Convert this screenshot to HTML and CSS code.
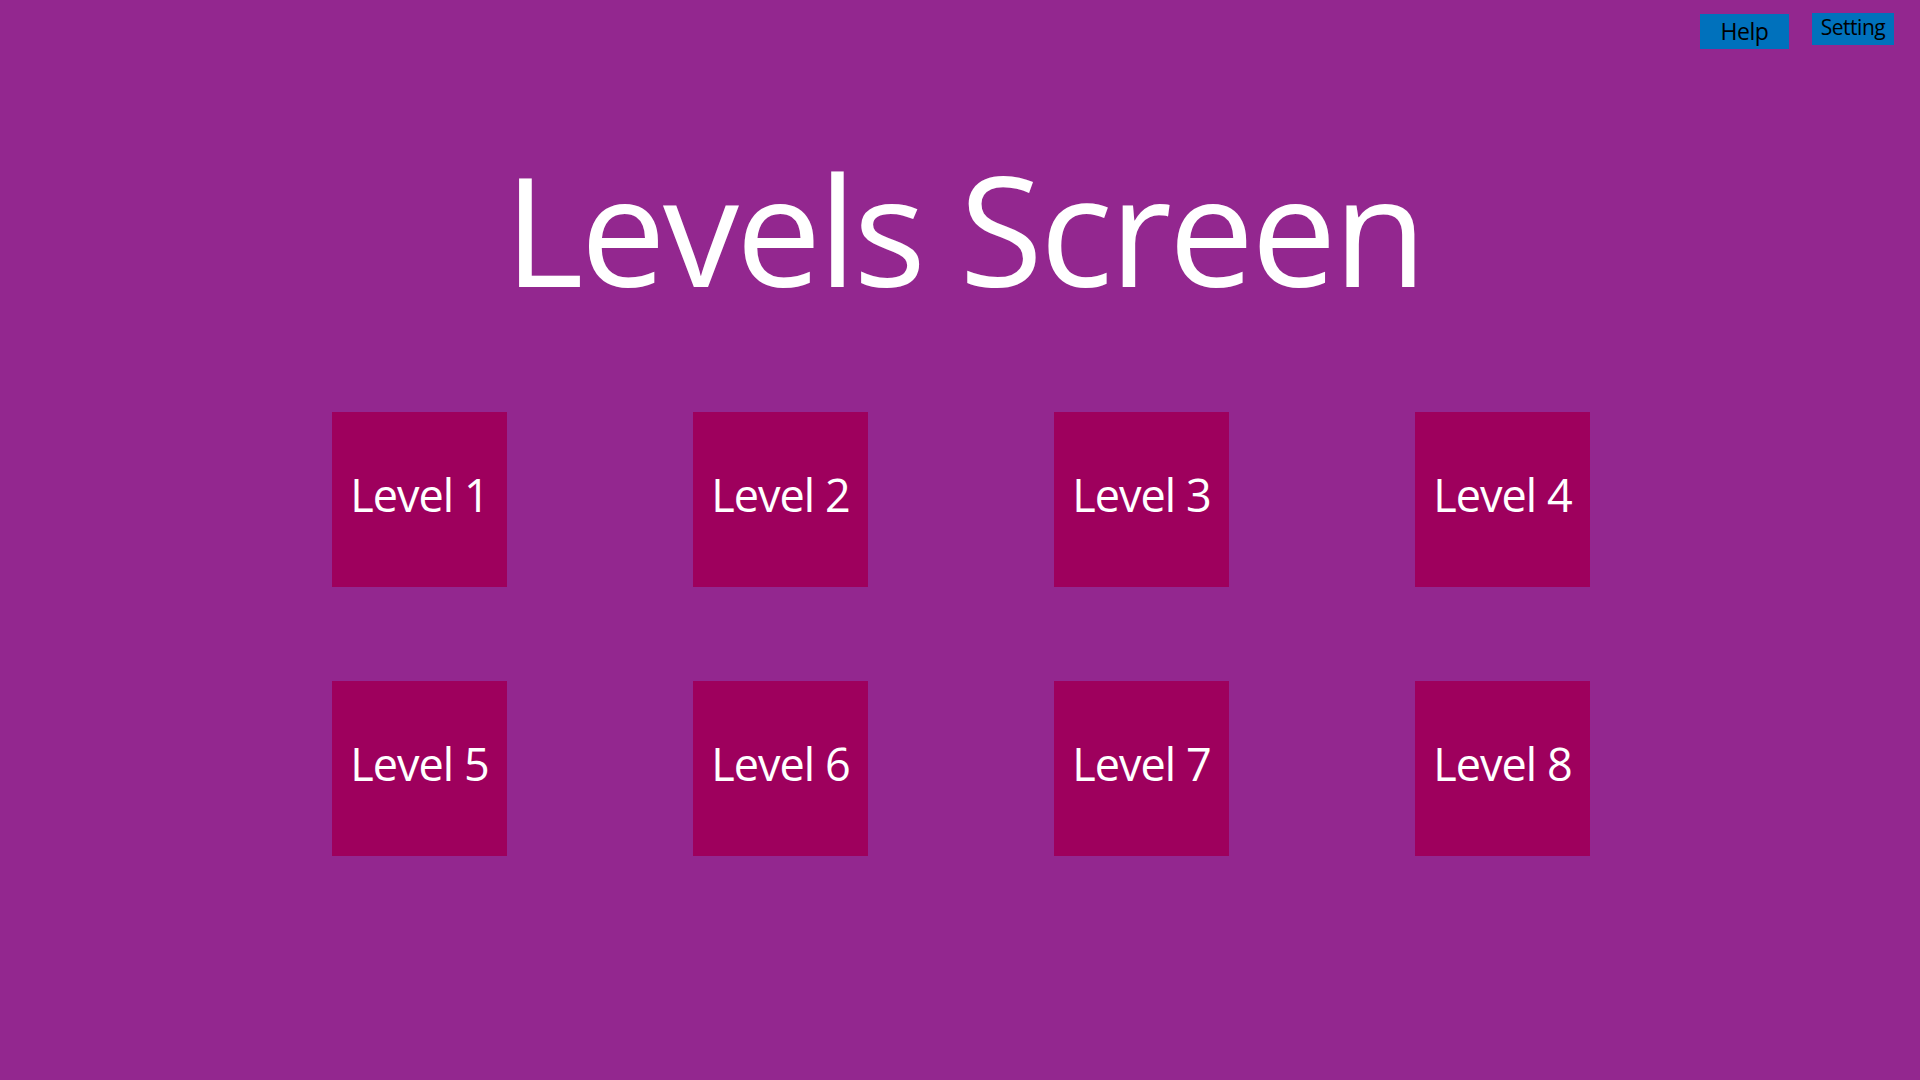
FILE: index.html
```html
<!DOCTYPE html>
<html lang="en">
<head>
<meta charset="utf-8">
<title>Levels Screen</title>
<link rel="stylesheet" href="styles.css">
</head>
<body>
<div class="screen">
  <div class="topbar">
    <button class="btn btn-help">Help</button>
    <button class="btn btn-setting">Setting</button>
  </div>
  <h1 class="title">Levels Screen</h1>
  <div class="levels">
    <div class="tile">Level 1</div>
    <div class="tile">Level 2</div>
    <div class="tile">Level 3</div>
    <div class="tile">Level 4</div>
    <div class="tile">Level 5</div>
    <div class="tile">Level 6</div>
    <div class="tile">Level 7</div>
    <div class="tile">Level 8</div>
  </div>
</div>
</body>
</html>
```
FILE: styles.css
```css
html, body {
  margin: 0;
  padding: 0;
  background: #93278f;
}
.screen {
  width: 1920px;
  height: 1080px;
  font-family: "Open Sans", "Noto Sans", sans-serif;
  overflow: hidden;
}
.topbar {
  display: flex;
  justify-content: flex-end;
  align-items: flex-start;
  gap: 23px;
  padding: 13px 26px 0 0;
  height: 36px;
}
.btn {
  border: none;
  margin: 0;
  padding: 0;
  background: #0071bc;
  color: #000;
  font-family: "Open Sans", "Noto Sans", sans-serif;
  letter-spacing: -0.5px;
}
.btn-help {
  width: 89px;
  height: 35px;
  margin-top: 1px;
  font-size: 23px;
  line-height: 30px;
  padding-bottom: 1px;
}
.btn-setting {
  width: 82px;
  height: 32px;
  font-size: 21px;
  line-height: 28px;
  padding-bottom: 4px;
}
.title {
  margin: 0;
  padding: 80px 0 0 8px;
  text-align: center;
  color: #fff;
  font-weight: 400;
  font-size: 152px;
  line-height: 200px;
  letter-spacing: -3px;
}
.levels {
  display: grid;
  grid-template-columns: repeat(4, 175px);
  grid-auto-rows: 175px;
  column-gap: 186px;
  row-gap: 94px;
  justify-content: center;
  margin-top: 83px;
  padding-left: 2px;
}
.tile {
  background: #9e005d;
  color: #fff;
  display: flex;
  align-items: center;
  justify-content: center;
  font-size: 45px;
  letter-spacing: -1px;
  padding-bottom: 10px;
  box-sizing: border-box;
}
```
